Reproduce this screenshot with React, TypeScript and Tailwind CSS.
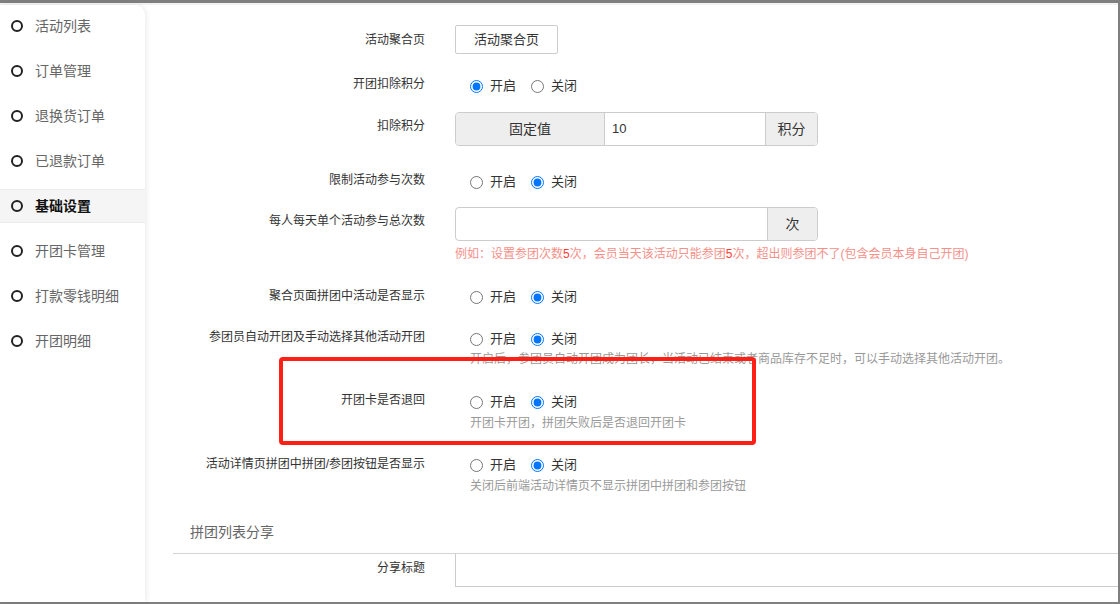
import React from "react";

const FONT = { fontFamily: '"Liberation Sans", "Noto Sans CJK SC", sans-serif' };

const menu = ["活动列表", "订单管理", "退换货订单", "已退款订单", "基础设置", "开团卡管理", "打款零钱明细", "开团明细"];

function Radios({ name, on, pt }: { name: string; on: boolean; pt: string }) {
  return (
    <div className={`flex items-center h-[20px] pl-[15px] gap-[15px] text-[13px] text-[#333] ${pt}`}>
      <label className="flex items-center gap-[7px]">
        <input type="radio" name={name} defaultChecked={on} className="m-0 w-[13px] h-[13px]" />
        <span>开启</span>
      </label>
      <label className="flex items-center gap-[7px]">
        <input type="radio" name={name} defaultChecked={!on} className="m-0 w-[13px] h-[13px]" />
        <span>关闭</span>
      </label>
    </div>
  );
}

function Label({ text, pt = "" }: { text: string; pt?: string }) {
  return (
    <div className={`w-[252px] shrink-0 text-right text-[12px] leading-[20px] text-[#333] ${pt}`}>{text}</div>
  );
}

function Hint({ text, mt }: { text: string; mt: string }) {
  return <div className={`pl-[15px] text-[12px] leading-[16px] text-[#999] whitespace-nowrap ${mt}`}>{text}</div>;
}

export default function App() {
  return (
    <div
      className="relative w-[1120px] h-[604px] bg-[#7f7f7f] flex flex-col overflow-hidden pt-[3px] pr-[2px] pb-[2px]"
      style={FONT}
    >
      <div className="h-[2px] bg-[#f2f2f2] shrink-0" />
      <div className="flex flex-1 min-h-0 bg-white">
        {/* sidebar */}
        <div className="w-[145px] shrink-0 bg-white rounded-tr-[10px] shadow-[2px_0_5px_rgba(0,0,0,0.07)] z-10">
          {menu.map((m, i) => {
            const active = i === 4;
            return (
              <div key={m} className="h-[45px] pt-[4px]">
                <div
                  className={`h-[34px] flex items-center ${
                    active ? "bg-[#f5f5f5] border-y border-[#ececec]" : ""
                  }`}
                >
                  <span className="ml-[11px] mr-[12px] w-[12px] h-[12px] rounded-full border-2 border-[#222] shrink-0" />
                  <span className={`text-[14px] ${active ? "font-bold text-[#111]" : "text-[#666]"}`}>{m}</span>
                </div>
              </div>
            );
          })}
        </div>

        {/* main */}
        <div className="flex-1 min-w-0 pl-[28px] pt-[20px] overflow-hidden">
          <div className="flex h-[49px] gap-[30px]">
            <Label text="活动聚合页" pt="pt-[5px]" />
            <button className="w-[103px] h-[29px] border border-[#ccc] rounded-[2px] text-[13px] text-[#333] bg-white">
              活动聚合页
            </button>
          </div>

          <div className="flex h-[38px] gap-[30px]">
            <Label text="开团扣除积分" />
            <Radios name="r1" on={true} pt="mt-[2px]" />
          </div>

          <div className="flex h-[58px] gap-[30px]">
            <Label text="扣除积分" pt="pt-[4px]" />
            <div className="flex h-[34px] w-[363px] border border-[#ccc] rounded-[4px] overflow-hidden text-[14px] text-[#333]">
              <div className="w-[149px] bg-[#eee] border-r border-[#ccc] flex items-center justify-center">固定值</div>
              <div className="w-[160px] flex items-center pl-[7px] text-[13px]">10</div>
              <div className="flex-1 bg-[#eee] border-l border-[#ccc] flex items-center justify-center">积分</div>
            </div>
          </div>

          <div className="flex h-[37px] gap-[30px]">
            <Label text="限制活动参与次数" />
            <Radios name="r2" on={false} pt="mt-[2px]" />
          </div>

          <div className="flex h-[79px] gap-[30px]">
            <Label text="每人每天单个活动参与总次数" pt="pt-[4px]" />
            <div>
              <div className="flex h-[34px] w-[363px] border border-[#ccc] rounded-[4px] overflow-hidden text-[14px] text-[#333]">
                <div className="flex-1" />
                <div className="w-[50px] bg-[#eee] border-l border-[#ccc] flex items-center justify-center">次</div>
              </div>
              <div className="mt-[5px] text-[12px] leading-[16px] text-[#f59089] whitespace-nowrap">
                例如：设置参团次数<span className="text-[#ff3b30]">5</span>次，会员当天该活动只能参团
                <span className="text-[#ff3b30]">5</span>次，超出则参团不了(包含会员本身自己开团)
              </div>
            </div>
          </div>

          <div className="flex h-[41px] gap-[30px]">
            <Label text="聚合页面拼团中活动是否显示" />
            <Radios name="r3" on={false} pt="mt-[1px]" />
          </div>

          <div className="flex h-[63px] gap-[30px]">
            <Label text="参团员自动开团及手动选择其他活动开团" />
            <div>
              <Radios name="r4" on={false} pt="mt-[2px]" />
              <Hint
                mt="mt-[2px]"
                text="开启后，参团员自动开团成为团长，当活动已结束或者商品库存不足时，可以手动选择其他活动开团。"
              />
            </div>
          </div>

          <div className="flex h-[64px] gap-[30px]">
            <Label text="开团卡是否退回" />
            <div>
              <Radios name="r5" on={false} pt="mt-[2px]" />
              <Hint mt="mt-[3px]" text="开团卡开团，拼团失败后是否退回开团卡" />
            </div>
          </div>

          <div className="flex h-[68px] gap-[30px]">
            <Label text="活动详情页拼团中拼团/参团按钮是否显示" />
            <div>
              <Radios name="r6" on={false} pt="mt-[1px]" />
              <Hint mt="mt-[3px]" text="关闭后前端活动详情页不显示拼团中拼团和参团按钮" />
            </div>
          </div>

          <div className="h-[32px] border-b border-[#d4d4d4] pl-[17px] text-[14px] leading-[20px] text-[#666]">
            拼团列表分享
          </div>

          <div className="flex h-[40px] gap-[30px]">
            <Label text="分享标题" pt="pt-[4px]" />
            <div className="flex-1 h-[33px] border border-t-0 border-[#ccc] border-r-0" />
          </div>
        </div>
      </div>

      {/* annotation */}
      <div className="absolute left-[279px] top-[357px] w-[477px] h-[88px] border-4 border-[#ff2015] rounded-[4px]" />
    </div>
  );
}
